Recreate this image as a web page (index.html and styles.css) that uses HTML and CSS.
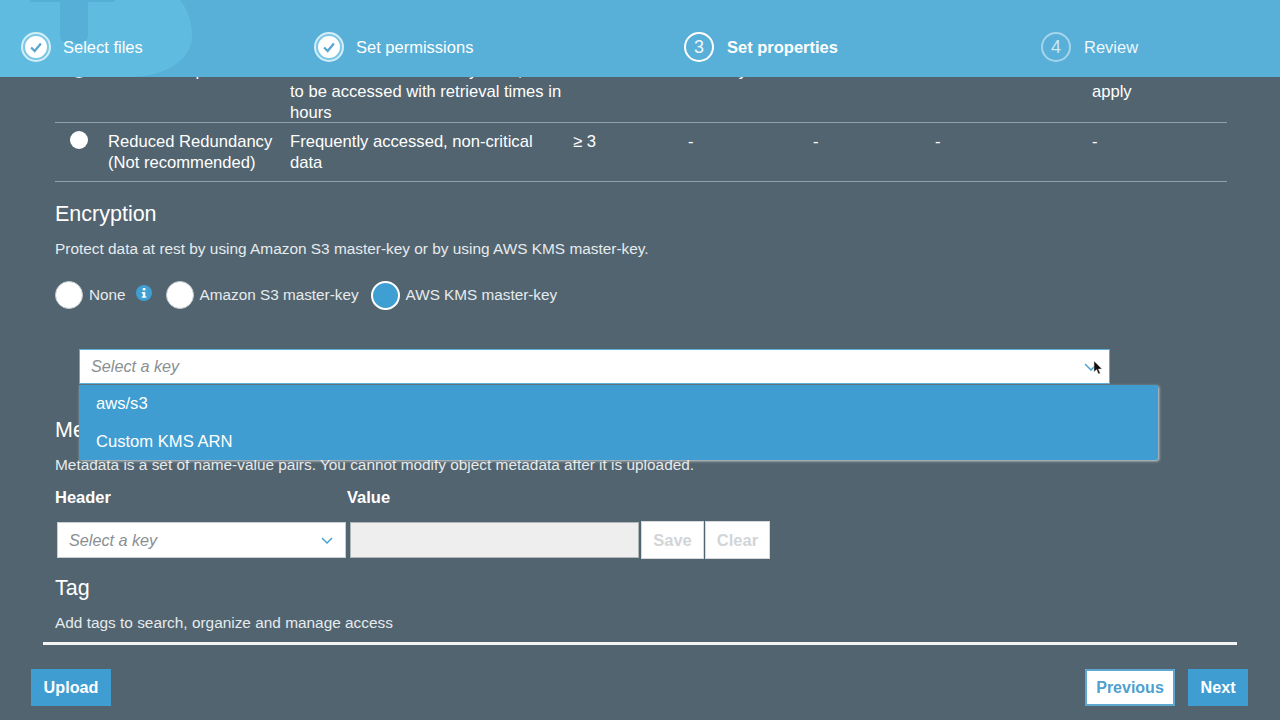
FILE: index.html
```html
<!DOCTYPE html>
<html lang="en">
<head>
<meta charset="utf-8">
<title>Upload</title>
<link rel="stylesheet" href="styles.css">
</head>
<body>
<div class="app">
  <header class="steps">
    <svg class="watermark" width="200" height="77" viewBox="0 0 200 77" aria-hidden="true">
      <path d="M0 0H180C188 10 192 22 192 36C192 60 165 77 130 77H0Z" fill="#5fbbdf"/>
      <path d="M30 0H115V2H88V34C88 40 85 43 80 43H68C63 43 60 40 60 34V2H30Z" fill="#55afd7"/>
    </svg>
    <div class="step step-1">
      <span class="badge done"><svg width="16" height="16" viewBox="0 0 18 18"><path d="M3.5 9.5L7.5 13.5L14.5 5" fill="none" stroke="#5ba6cf" stroke-width="2.6"/></svg></span>
      <span>Select files</span>
    </div>
    <div class="step step-2">
      <span class="badge done"><svg width="16" height="16" viewBox="0 0 18 18"><path d="M3.5 9.5L7.5 13.5L14.5 5" fill="none" stroke="#5ba6cf" stroke-width="2.6"/></svg></span>
      <span>Set permissions</span>
    </div>
    <div class="step step-3">
      <span class="badge num">3</span>
      <span>Set properties</span>
    </div>
    <div class="step step-4 todo">
      <span class="badge num">4</span>
      <span>Review</span>
    </div>
  </header>

  <main class="content">
    <div class="storage">
      <div class="row row-a">
        <span class="c-radio"><span class="dot"></span></span>
        <div class="c-name">Glacier Deep</div>
        <div class="c-desc">Archive data that is rarely used,<br>to be accessed with retrieval times in hours</div>
        <div class="c-n"></div>
        <div class="c-d1">180 days</div>
        <div class="c-d2"></div>
        <div class="c-d3"></div>
        <div class="c-d4"><br>apply</div>
      </div>
      <div class="row row-b">
        <span class="c-radio"><span class="dot"></span></span>
        <div class="c-name">Reduced Redundancy (Not recommended)</div>
        <div class="c-desc">Frequently accessed, non-critical data</div>
        <div class="c-n">≥ 3</div>
        <div class="c-d1">-</div>
        <div class="c-d2">-</div>
        <div class="c-d3">-</div>
        <div class="c-d4">-</div>
      </div>
    </div>

    <section class="encryption">
      <h2>Encryption</h2>
      <p class="desc">Protect data at rest by using Amazon S3 master-key or by using AWS KMS master-key.</p>
      <div class="radios">
        <span class="bigradio"></span><span class="r-label">None</span>
        <svg class="info" width="16" height="16" viewBox="0 0 16 16" aria-hidden="true"><circle cx="8" cy="8" r="8" fill="#3f9fd3"/><rect x="6.8" y="3" width="2.6" height="2.4" fill="#fff"/><path d="M5.8 7H9.3V11.4H10.4V12.8H5.7V11.4H6.9V8.4H5.8Z" fill="#fff"/></svg>
        <span class="bigradio"></span><span class="r-label">Amazon S3 master-key</span>
        <span class="bigradio on"></span><span class="r-label">AWS KMS master-key</span>
      </div>
      <div class="keyselect">
        <div class="select select-open">
          <span>Select a key</span>
          <svg class="chev" width="14" height="8" viewBox="0 0 14 8"><path d="M1 1L7 7L13 1" fill="none" stroke="#4ba3d3" stroke-width="1.5"/></svg>
          <svg class="cursor" width="10" height="14" viewBox="0 0 10 14"><path d="M1 0V11L3.6 8.6L5.4 13L7.2 12.2L5.4 8H9Z" fill="#111" stroke="#ddd" stroke-width=".5"/></svg>
        </div>
        <ul class="menu">
          <li>aws/s3</li>
          <li>Custom KMS ARN</li>
        </ul>
      </div>
    </section>

    <section class="metadata">
      <h2>Metadata</h2>
      <p class="desc desc-meta">Metadata is a set of name-value pairs. You cannot modify object metadata after it is uploaded.</p>
      <div class="meta-labels">
        <span class="l-header">Header</span>
        <span>Value</span>
      </div>
      <div class="meta-row">
        <div class="select select-meta">
          <span>Select a key</span>
          <svg width="12" height="7" viewBox="0 0 12 7"><path d="M1 1L6 6L11 1" fill="none" stroke="#4ba3d3" stroke-width="1.5"/></svg>
        </div>
        <div class="value-box"></div>
        <span class="ghost g-save">Save</span>
        <span class="ghost g-clear">Clear</span>
      </div>
    </section>

    <section class="tag">
      <h2>Tag</h2>
      <p class="desc">Add tags to search, organize and manage access</p>
    </section>
  </main>

  <footer class="foot">
    <button class="btn primary">Upload</button>
    <div class="foot-right">
      <button class="btn outline">Previous</button>
      <button class="btn primary">Next</button>
    </div>
  </footer>
</div>
</body>
</html>
```
FILE: styles.css
```css
* { box-sizing: border-box; }
html, body { margin: 0; height: 100%; }
body {
  width: 1280px;
  height: 720px;
  overflow: hidden;
  background: #52646f;
  color: #fff;
  font-family: "Liberation Sans", Arial, sans-serif;
  font-size: 16.5px;
}
.app { display: flex; flex-direction: column; height: 720px; position: relative; }

/* header */
.steps {
  flex: 0 0 77px;
  height: 77px;
  background: #58afd7;
  position: relative;
  z-index: 3;
  overflow: hidden;
  display: grid;
  grid-template-columns: 293px 370px 357px 1fr;
  padding: 32px 0 0 21px;
  align-items: start;
}
.watermark { position: absolute; left: 0; top: 0; }
.step { display: flex; align-items: center; gap: 13px; height: 30px; position: relative; }
.badge {
  width: 30px; height: 30px; border-radius: 50%;
  display: flex; align-items: center; justify-content: center;
  flex: none;
}
.badge.done {
  width: 26px; height: 26px; margin: 2px 1px 2px 2px;
  background: #fff;
  border: 2px solid #7cc6e6;
  box-shadow: 0 0 0 2px #d4eef8;
}
.badge.num { border: 2px solid #fff; font-size: 18px; color: #eef8fc; }
.step-3 { font-weight: 700; }
.step-3 .badge { font-weight: 400; }
.todo .badge { border-color: #a5d5ec; color: #cde8f5; }
.todo { color: #eef8fc; }

/* content */
.content { flex: 1; min-height: 0; padding: 0 53px 0 55px; }
.storage { margin-top: -27px; font-size: 16.6px; }
.row {
  display: grid;
  grid-template-columns: 53px 182px 283px 115px 125px 122px 157px 135px;
  line-height: 21px;
  border-bottom: 1px solid #93a0a8;
}
.row-a { height: 73px; padding-top: 10px; }
.row-b { height: 59px; padding-top: 8px; }
.c-radio { position: relative; display: block; }
.dot {
  position: absolute; left: 15px; top: 0;
  width: 18px; height: 18px; border-radius: 50%;
  background: #fff;
}
.c-desc { padding-right: 10px; }
.c-d1 { white-space: nowrap; }

h2 { font-size: 21.5px; font-weight: 400; margin: 0; line-height: 24px; }
.desc { margin: 0; font-size: 15.4px; line-height: 20px; color: #e6ebee; }

.encryption { padding-top: 20px; position: relative; }
.encryption .desc { margin-top: 13px; }
.radios { display: flex; align-items: center; margin-top: 20px; height: 32px; }
.bigradio {
  width: 28px; height: 28px; border-radius: 50%;
  background: #fff; border: 1px solid #c5ccd0; flex: none;
}
.bigradio.on { background: #3f9fd3; border: 2px solid #fff; width: 29px; height: 29px; margin-left: 6px; }
.r-label { margin: 0 6px; color: #e6ebee; font-size: 15.3px; }
.info { margin: -4px 14px 0 4px; }

.keyselect { margin: 38px 0 0 24px; position: relative; width: 1031px; }
.select {
  background: #fff;
  display: flex; align-items: center; justify-content: space-between;
  color: #8a8f93; font-style: italic; font-size: 16.2px;
}
.select-open {
  height: 35px; padding: 0 11px 0 11px;
  border: 1px solid #5aaed8;
  position: relative;
}
.cursor { position: absolute; right: 6px; top: 11px; }
.menu {
  position: absolute; left: 0; top: 36px;
  width: 1079px; height: 75px;
  margin: 0; padding: 0; list-style: none;
  background: #3f9dd1;
  border-radius: 0 2px 2px 2px;
  box-shadow: 1px 1px 3px rgba(255,255,255,.75);
  z-index: 2;
  font-size: 16.6px;
}
.menu li { height: 37.5px; line-height: 37.5px; padding-left: 17px; }

.metadata { margin-top: 34px; }
.desc-meta { margin-top: 13px; }
.meta-labels { display: flex; font-weight: 700; margin-top: 12px; line-height: 20px; }
.l-header { width: 292px; }
.meta-row { display: flex; align-items: center; margin-top: 14px; padding-left: 2px; height: 38px; }
.select-meta {
  width: 289px; height: 36px; padding: 0 12px 0 11px;
  border: 1px solid #c9ced1;
}
.value-box {
  width: 289px; height: 36px; margin-left: 4px;
  background: #eeeeee; border: 1px solid #aeb6ba;
}
.ghost {
  height: 38px; background: #fff; border: 1px solid #d5d9db;
  color: #d2d5d7; font-weight: 700; display: flex; align-items: center; justify-content: center;
}
.g-save { width: 63px; margin-left: 2px; }
.g-clear { width: 65px; margin-left: 1px; }

.tag { margin-top: 17px; }
.tag .desc { margin-top: 13px; }

/* footer */
.foot {
  flex: 0 0 78px;
  margin: 0 43px;
  border-top: 3px solid #f2f4f5;
  display: flex; justify-content: space-between; align-items: flex-start;
  padding-top: 24px;
  position: relative;
}
.foot > .btn { margin-left: -12px; }
.foot-right { display: flex; gap: 13px; margin-right: -11px; }
.btn {
  height: 37px; padding: 0; border: 0; font: 700 16.2px "Liberation Sans", Arial, sans-serif;
  display: block;
}
.primary { background: #3f9dd1; color: #fff; width: 80px; }
.foot-right .primary { width: 60px; }
.outline { background: #fff; color: #4f9fcf; border: 2px solid #5ea7d0; width: 90px; font-size: 16px; }
```
